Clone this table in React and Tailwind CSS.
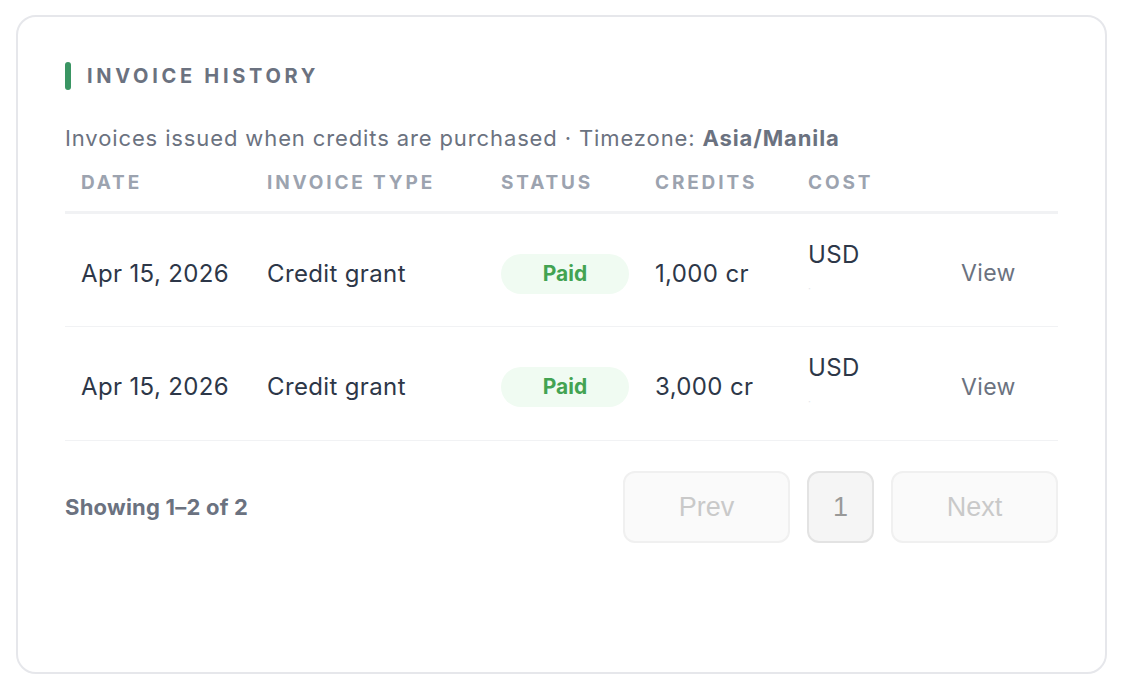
import React from "react";

const invoices = [
  { date: "Apr 15, 2026", type: "Credit grant", status: "Paid", credits: "1,000 cr", currency: "USD" },
  { date: "Apr 15, 2026", type: "Credit grant", status: "Paid", credits: "3,000 cr", currency: "USD" },
];

const App = () => {
  return (
    <div className="min-h-[690px] bg-white pt-[15px] pl-4 pr-[17px] font-['Inter',_'Liberation_Sans',_sans-serif]">
      <div className="h-[659px] rounded-[20px] border-2 border-[#e6e7eb] bg-white px-[47px] pt-[45px]">
        {/* Header */}
        <div className="flex items-center gap-[16px]">
          <div className="h-[28px] w-[6px] rounded-full bg-[#3a9563]"></div>
          <h2 className="text-[20px] leading-[28px] font-bold uppercase tracking-[0.185em] text-[#6b7280]">
            Invoice History
          </h2>
        </div>

        <p className="mt-[34px] text-[22px] leading-[28px] tracking-[0.04em] text-[#6b7280]">
          Invoices issued when credits are purchased · Timezone:{" "}
          <span className="font-bold">Asia/Manila</span>
        </p>

        {/* Table */}
        <table className="mt-[17px] w-full table-fixed border-collapse">
          <thead>
            <tr className="border-b-[3px] border-[#f1f2f4] text-left text-[19px] leading-[28px] font-bold uppercase tracking-[0.15em] text-[#9ca3af]">
              <th className="w-[186px] pb-[14px] pl-4 font-bold">Date</th>
              <th className="w-[234px] pb-[14px] pl-4 font-bold">Invoice Type</th>
              <th className="w-[154px] pb-[14px] pl-4 font-bold">Status</th>
              <th className="w-[153px] pb-[14px] pl-4 font-bold">Credits</th>
              <th className="w-[153px] pb-[14px] pl-4 font-bold">Cost</th>
              <th className="pb-[14px] font-bold"></th>
            </tr>
          </thead>
          <tbody>
            {invoices.map((inv, i) => (
              <tr key={i} className="h-[114px] border-b border-[#f1f2f4] text-[24px] tracking-[0.015em] text-[#2d3748]">
                <td className="pl-4 pt-[7px]">{inv.date}</td>
                <td className="pl-4 pt-[7px]">{inv.type}</td>
                <td className="pl-4 pt-[7px]">
                  <span className="inline-flex h-[40px] w-[128px] items-center justify-center rounded-full bg-[#f0fbf2] text-[21px] font-bold tracking-normal text-[#43a352]">
                    {inv.status}
                  </span>
                </td>
                <td className="pl-4 pt-[7px]">{inv.credits}</td>
                <td className="pl-4 pt-[7px]">
                  <div className="flex flex-col">
                    <span className="leading-[28px]">{inv.currency}</span>
                    <span className="text-[10px] leading-[38px] text-[#e5e7eb]">·</span>
                  </div>
                </td>
                <td className="pl-4 pt-[7px] text-[23px] text-[#6b7280]">View</td>
              </tr>
            ))}
          </tbody>
        </table>

        {/* Footer */}
        <div className="mt-[30px] flex items-center justify-between">
          <p className="text-[22px] font-bold tracking-[0.01em] text-[#6b7280]">Showing 1–2 of 2</p>
          <div className="flex gap-[17px] font-['Liberation_Sans',_Arial,_sans-serif]">
            <button className="h-[72px] w-[167px] rounded-[12px] border-2 border-[#f0f0f0] bg-[#fafafa] text-[27px] text-[#c9c9c9]">
              Prev
            </button>
            <button className="h-[72px] w-[67px] rounded-[12px] border-2 border-[#e3e3e3] bg-[#f5f5f5] text-[27px] text-[#999999]">
              1
            </button>
            <button className="h-[72px] w-[167px] rounded-[12px] border-2 border-[#f0f0f0] bg-[#fafafa] text-[27px] text-[#c9c9c9]">
              Next
            </button>
          </div>
        </div>
      </div>
    </div>
  );
};

export default App;
